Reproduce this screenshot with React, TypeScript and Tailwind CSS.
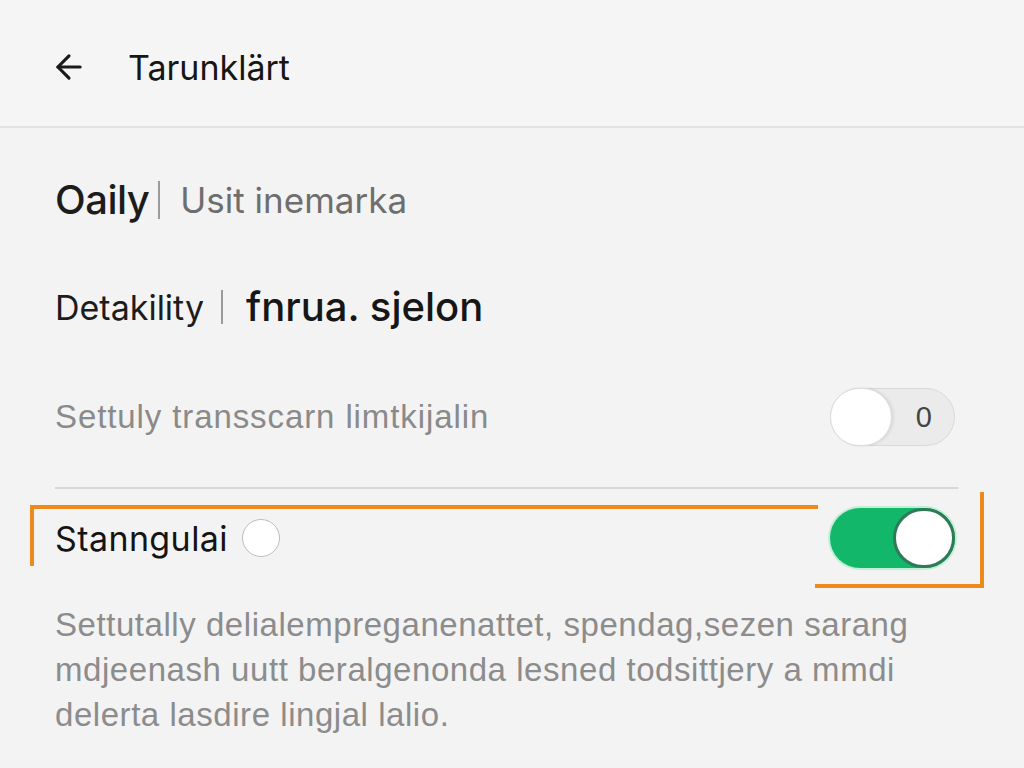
import { ArrowLeft } from 'lucide-react';

const sans = "font-['Inter','Noto_Sans',sans-serif]";
const arial = "font-['Liberation_Sans','Roboto',sans-serif]";

function GrayToggle() {
  return (
    <div className="relative flex h-[58px] w-[125px] items-center justify-end rounded-full border border-[#d9d9d9] bg-[#ebebeb] pr-[22px]">
      <div className="absolute left-[-1px] top-[-1px] h-[58px] w-[62px] rounded-full border border-[#dcdcdc] bg-white shadow-[2px_0_3px_rgba(0,0,0,0.08)]" />
      <span className={`${arial} text-[29px] leading-none text-[#444]`}>0</span>
    </div>
  );
}

function GreenToggle() {
  return (
    <div className="flex h-[60px] w-[125px] items-center justify-end rounded-full bg-[#12b76a] shadow-[0_0_0_2px_#bff0d6]">
      <div className="h-[60px] w-[62px] rounded-full border-[3px] border-[#2f7a58] bg-white" />
    </div>
  );
}

export default function App() {
  return (
    <div className="min-h-[768px] w-full bg-[#f3f3f3] text-[#1a1a1a]">
      <header className="flex h-[128px] items-center gap-[40px] border-b-2 border-[#e2e2e2] bg-[#f5f5f5] pl-[50px] pt-[8px]">
        <ArrowLeft className="h-[38px] w-[38px] text-[#1a1a1a]" strokeWidth={2} />
        <h1 className={`${sans} text-[34px] font-normal text-[#161616]`}>Tarunklärt</h1>
      </header>

      <div className="px-[55px]">
        <div className="mt-[32px] flex h-[80px] items-center">
          <span className={`${sans} text-[40px] font-medium tracking-[-0.5px] text-[#1c1c1c]`}>Oaily</span>
          <span className="ml-[9px] h-[38px] w-[2px] bg-[#9a9a9a]" />
          <span className={`${sans} ml-[20px] text-[35px] text-[#6e6e6e]`}>Usit inemarka</span>
        </div>

        <div className="mt-[27px] flex h-[80px] items-center">
          <span className={`${sans} text-[34px] text-[#1c1c1c]`}>Detakility</span>
          <span className="ml-[17px] h-[34px] w-[2px] bg-[#9a9a9a]" />
          <span className={`${sans} ml-[23px] text-[40px] font-medium text-[#161616]`}>fnrua. sjelon</span>
        </div>

        <div className="mt-[41px] flex h-[58px] items-center justify-between pr-[14px]">
          <span className={`${arial} text-[33px] tracking-[0.9px] text-[#8a8a8a]`}>Settuly transscarn limtkijalin</span>
          <GrayToggle />
        </div>

        <div className="mr-[11px] mt-[41px] h-[2px] bg-[#d8d8d8]" />
      </div>

      <div className="relative mt-[19px] flex h-[60px] items-center justify-between pl-[55px] pr-[69px]">
        <div className="absolute left-[30px] top-[-3px] h-[4px] w-[788px] bg-[#ee8a1c]" />
        <div className="absolute left-[30px] top-[-3px] h-[61px] w-[4px] bg-[#ee8a1c]" />
        <div className="absolute left-[980px] top-[-16px] h-[96px] w-[4px] bg-[#ee8a1c]" />
        <div className="absolute left-[815px] top-[76px] h-[4px] w-[169px] bg-[#ee8a1c]" />
        <div className="flex items-center gap-[14px]">
          <span className={`${sans} text-[34px] tracking-[0.4px] text-[#141414]`}>Stanngulai</span>
          <span className="h-[38px] w-[38px] rounded-full border border-[#bdbdbd] bg-white" />
        </div>
        <GreenToggle />
      </div>

      <p className={`${arial} mt-[34px] px-[55px] text-[33px] leading-[45px] tracking-[0.55px] text-[#8c8c8c]`}>
        Settutally delialempreganenattet, spendag,sezen sarang
        <br />
        mdjeenash uutt beralgenonda lesned todsittjery a mmdi
        <br />
        delerta lasdire lingjal lalio.
      </p>
    </div>
  );
}
